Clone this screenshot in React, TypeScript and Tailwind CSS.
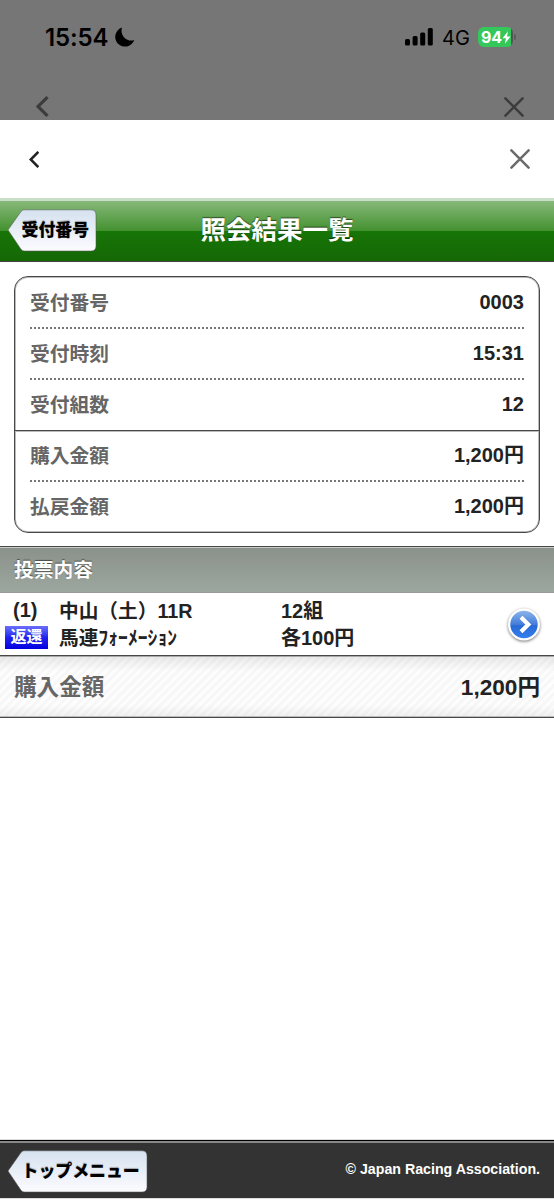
import type { ReactNode } from "react";

type ArrowButtonProps = {
  width: number;
  children: ReactNode;
};

function ArrowButton({ width, children }: ArrowButtonProps) {
  const path = `M1 21 L14 2.5 Q15.2 .8 17 .8 H${width - 6} Q${width - 1} .8 ${width - 1} 6 V37 Q${width - 1} 42 ${width - 6} 42 H17 Q15.2 42 14 40.3 Z`;
  return (
    <button className="relative h-[43px] shrink-0" style={{ width }}>
      <svg className="absolute inset-0" width={width} height="43" viewBox={`0 0 ${width} 43`}>
        <defs>
          <linearGradient id={`btn-${width}`} x1="0" y1="0" x2="0" y2="1">
            <stop offset="0" stopColor="#d5e2ef" />
            <stop offset=".5" stopColor="#e9eef7" />
            <stop offset="1" stopColor="#fcfcff" />
          </linearGradient>
        </defs>
        <path d={path} fill={`url(#btn-${width})`} stroke="#555" strokeOpacity=".55" />
      </svg>
      <span className="relative block pl-[14.5px] text-left text-[16.900px] leading-[41px] font-black whitespace-nowrap text-black [text-shadow:0_-1px_1px_rgba(0,0,0,0.3)]">
        {children}
      </span>
    </button>
  );
}

type IconProps = {
  size: number;
  className: string;
};

function Chevron({ size, className }: IconProps) {
  return (
    <svg className={className} width={size * 0.6} height={size} viewBox="0 0 12 20" fill="none" stroke="currentColor" strokeWidth="3">
      <path d="M11 1 L2 10 L11 19" />
    </svg>
  );
}

function Cross({ size, className }: IconProps) {
  return (
    <svg className={className} width={size} height={size} viewBox="0 0 20 20" fill="none" stroke="currentColor" strokeWidth="2.5" strokeLinecap="round">
      <path d="M1.4 1.4 L18.6 18.6 M18.6 1.4 L1.4 18.6" />
    </svg>
  );
}

function StatusBar() {
  return (
    <div className="flex h-[74px] items-center justify-between pr-[41px] pl-[45px] font-['Inter'] text-black">
      <div className="flex items-center">
        <span className="w-[70px] pt-px text-[24px] leading-[74px] font-semibold tracking-[-0.1px]">15:54</span>
        <svg width="20" height="20" viewBox="0 0 20 20">
          <path d="M7 .5 A9.8 9.8 0 1 0 19.3 13 C12 15.5 4.500 8.500 7 .5 Z" />
        </svg>
      </div>
      <div className="flex items-center">
        <svg width="28" height="18" viewBox="0 0 28 18">
          <rect x="0" y="11" width="5" height="6.500" rx="1.500" />
          <rect x="7.600" y="8" width="5" height="9.500" rx="1.500" />
          <rect x="15.200" y="4.500" width="5" height="13" rx="1.500" />
          <rect x="22.800" y="0" width="5" height="17.500" rx="1.500" />
        </svg>
        <span className="ml-[9px] w-[36px] pt-px text-[20px] leading-[74px] font-normal">4G</span>
        <div className="relative flex h-[20px] w-[35px] items-center rounded-[6px] bg-[linear-gradient(90deg,#34c759_33px,#555_33px)] pl-[3px]">
          <span className="text-[16px] font-bold tracking-[-0.2px] text-white">94</span>
          <svg width="9" height="13" viewBox="0 0 9 13" fill="#fff">
            <path d="M6 .3 L.5 7.300 H4 L2.800 12.700 L8.500 5.600 H5 Z" />
          </svg>
          <span className="absolute top-[7px] -right-[3px] h-[6px] w-[2px] rounded-r-full bg-[#5c5c5c]" />
        </div>
      </div>
    </div>
  );
}

const rows = [
  { label: "受付番号", value: "0003", line: "dotted" },
  { label: "受付時刻", value: "15:31", line: "dotted" },
  { label: "受付組数", value: "12", line: "solid" },
  { label: "購入金額", value: "1,200円", line: "dotted" },
  { label: "払戻金額", value: "1,200円", line: "none" },
];

function Summary() {
  return (
    <div className="mx-[14px] mt-[14px] h-[257px] shrink-0 rounded-[14px] border border-[#484848] pt-px shadow-[inset_0_0_0_1px_#bbb]">
      {rows.map((row) => (
        <div key={row.label} className={row.line === "solid" ? "border-b border-[#484848] shadow-[0_1px_0_#bbb]" : ""}>
          <div
            className={
              row.line === "dotted"
                ? "mx-[15px] flex h-[51px] justify-between border-b-2 border-dotted border-[#777]"
                : "mx-[15px] flex h-[50px] justify-between"
            }
          >
            <span className="text-[19.8px] leading-[50px] text-[#666]">{row.label}</span>
            <span className="leading-[48px]">{row.value}</span>
          </div>
        </div>
      ))}
    </div>
  );
}

function Detail() {
  return (
    <div className="flex h-[63px] shrink-0 border-b border-[#484848] pt-[4px] leading-[27px] shadow-[0_-1px_0_#999]">
      <div className="w-[59px]">
        <div className="pl-[13px]">(1)</div>
        <div className="mt-[2px] ml-[5px] h-[23px] w-[43px] bg-gradient-to-b from-[#6c6cfa] via-[#2020ee] to-[#0000e0] text-center text-[16px] leading-[22px] text-white">
          返還
        </div>
      </div>
      <div className="w-[222px] pt-px text-[19.700px]">
        <div>中山（土）11R</div>
        <div>馬連ﾌｫｰﾒｰｼｮﾝ</div>
      </div>
      <div className="flex-1 pt-px">
        <div>12組</div>
        <div>各100円</div>
      </div>
      <svg className="mt-[8px] mr-[10px]" width="40" height="42" viewBox="0 0 40 42">
        <defs>
          <linearGradient id="go" x1="0" y1="0" x2="0" y2="1">
            <stop offset="0" stopColor="#8db5ea" />
            <stop offset=".5" stopColor="#427cda" />
            <stop offset=".55" stopColor="#2869d5" />
            <stop offset="1" stopColor="#3680ed" />
          </linearGradient>
        </defs>
        <circle cx="20" cy="19.500" r="16" fill="#fff" className="drop-shadow-[0_1px_1.5px_rgba(0,0,0,0.55)]" />
        <circle cx="20" cy="19.500" r="13.700" fill="url(#go)" />
        <path d="M17 12.300 L24.300 19.500 L17 26.700" fill="none" stroke="#fff" strokeWidth="4.200" />
      </svg>
    </div>
  );
}

export default function App() {
  return (
    <div className="flex h-[1199px] w-full flex-col overflow-hidden bg-white font-['Liberation_Sans','Noto_Sans_CJK_JP',sans-serif] text-[20px] font-bold text-[#222]">
      <div className="h-[120px] shrink-0 bg-[#767676]">
        <StatusBar />
        <div className="flex justify-between pt-[22px] pr-[30px] pl-[36px] text-[#3c3c3c]">
          <Chevron size={21} className="" />
          <Cross size={20} className="mt-px" />
        </div>
      </div>

      <div className="flex h-[78px] shrink-0 items-center justify-between pr-[24px] pl-[29px]">
        <Chevron size={17} className="text-[#222]" />
        <Cross size={20} className="text-[#6a6a6a]" />
      </div>

      <header className="relative flex h-[64px] shrink-0 items-start border-t-[3px] border-b border-t-[#c8dec6] border-b-[#444] bg-[linear-gradient(180deg,#87b97a_0%,#43912f_50%,#177507_50%,#156805_100%)] pt-[8px] pl-[7px]">
        <ArrowButton width={90}>受付番号</ArrowButton>
        <h1 className="absolute inset-x-0 top-px text-center text-[25.5px] leading-[56px] text-white [text-shadow:0_-1px_1px_rgba(0,0,0,0.55)]">
          照会結果一覧
        </h1>
      </header>

      <Summary />

      <h2 className="mt-[13px] h-[47px] shrink-0 border-y border-[#484848] bg-gradient-to-b from-[#8a918a] to-[#9ca79f] pl-[14px] text-[19.8px] leading-[47px] text-white shadow-[inset_0_1px_0_#c8ccc8] [text-shadow:0_-1px_1px_rgba(0,0,0,0.5)]">
        投票内容
      </h2>

      <Detail />

      <div className="flex h-[62px] shrink-0 justify-between border-b border-[#484848] bg-[linear-gradient(180deg,rgba(0,0,0,0.08),transparent_25%,transparent_80%,rgba(0,0,0,0.05)),repeating-linear-gradient(135deg,#fdfdfd_0px,#fdfdfd_3px,#f7f7f7_3px,#f7f7f7_6px)] px-[14px] text-[22.6px] leading-[63px] shadow-[inset_0_1px_0_#aaa,inset_0_-1px_0_#bbb]">
        <span className="text-[#666]">購入金額</span>
        <span>1,200円</span>
      </div>

      <footer className="mt-auto border-b border-[#ddd]">
        <div className="border-t border-[#ddd]">
          <div className="flex h-[58px] items-start justify-between border-t border-black bg-[#333] pt-[9px] pr-[14px] pl-[7px] shadow-[inset_0_2px_0_#888]">
            <ArrowButton width={141}>トップメニュー</ArrowButton>
            <p className="text-[14.2px] leading-[38px] text-white">© Japan Racing Association.</p>
          </div>
        </div>
      </footer>
    </div>
  );
}
